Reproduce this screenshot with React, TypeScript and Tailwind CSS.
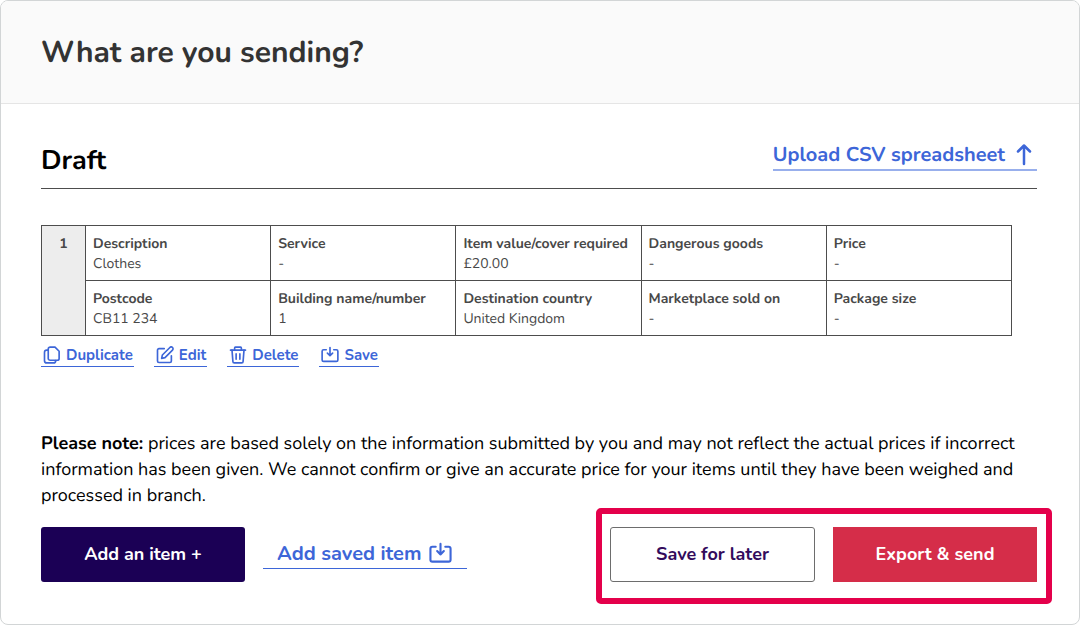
import type { ReactNode } from "react";

type Field = { label: string; value: string };

const rows: Field[][] = [
  [
    { label: "Description", value: "Clothes" },
    { label: "Service", value: "-" },
    { label: "Item value/cover required", value: "£20.00" },
    { label: "Dangerous goods", value: "-" },
    { label: "Price", value: "-" },
  ],
  [
    { label: "Postcode", value: "CB11 234" },
    { label: "Building name/number", value: "1" },
    { label: "Destination country", value: "United Kingdom" },
    { label: "Marketplace sold on", value: "-" },
    { label: "Package size", value: "-" },
  ],
];

function Icon({ className, children }: { className: string; children: ReactNode }) {
  return (
    <svg
      viewBox="0 0 24 24"
      className={className}
      fill="none"
      stroke="currentColor"
      strokeWidth="2.2"
      strokeLinecap="round"
      strokeLinejoin="round"
      aria-hidden="true"
    >
      {children}
    </svg>
  );
}

function SaveIcon({ className }: { className: string }) {
  return (
    <Icon className={className}>
      <path d="M7 5H3.500a2 2 0 0 0-2 2v11.500a2 2 0 0 0 2 2h17a2 2 0 0 0 2-2V7a2 2 0 0 0-2-2h-3.500" />
      <path d="M12 2v11M8.500 9.500l3.500 3.500 3.500-3.500" />
    </Icon>
  );
}

function DuplicateIcon({ className }: { className: string }) {
  return (
    <Icon className={className}>
      <path d="M9.500 1.500h6.500l5.500 5.500v9.500a2.500 2.500 0 0 1-2.500 2.500h-9.500a2.500 2.500 0 0 1-2.500-2.500V4a2.500 2.500 0 0 1 2.500-2.500z" />
      <path d="M7 5.500H5A3 3 0 0 0 2 8.500v11a3 3 0 0 0 3 3h9a3 3 0 0 0 3-3" />
    </Icon>
  );
}

function EditIcon({ className }: { className: string }) {
  return (
    <Icon className={className}>
      <path d="M11 3.500H4a2 2 0 0 0-2 2V20a2 2 0 0 0 2 2h14.500a2 2 0 0 0 2-2v-7" />
      <path d="M18.500 2a2.300 2.300 0 0 1 3.500 3.500L12 15.500l-4.500 1 1-4.500z" />
    </Icon>
  );
}

function TrashIcon({ className }: { className: string }) {
  return (
    <Icon className={className}>
      <path d="M2 5.500h20M7.500 5.500v-3a1 1 0 0 1 1-1h7a1 1 0 0 1 1 1v3" />
      <path d="M4 5.500l1.200 15a2 2 0 0 0 2 2h9.600a2 2 0 0 0 2-2l1.200-15M9.500 10.500v7M14.500 10.500v7" />
    </Icon>
  );
}

const actions = [
  { label: "Duplicate", icon: DuplicateIcon },
  { label: "Edit", icon: EditIcon },
  { label: "Delete", icon: TrashIcon },
  { label: "Save", icon: SaveIcon },
];

export default function App() {
  return (
    <main className="min-h-screen overflow-hidden rounded-lg border border-[#d2d5d6] bg-white font-['Nunito','Nunito_Sans','Lato',sans-serif] text-black [text-rendering:geometricPrecision]">
      <header className="border-b border-[#e5e5e5] bg-[#fafafa] px-10 pt-8 pb-[30px]">
        <h1 className="text-[30px] leading-10 font-bold text-[#333]">What are you sending?</h1>
      </header>

      <div className="pr-[42px] pl-10">
        <div className="flex items-start justify-between border-b border-[#4d4d4d] pt-[37px] pb-[7px]">
          <h2 className="text-[27px] leading-10 font-bold">Draft</h2>
          <a
            href="#upload"
            className="flex items-center border-b-2 border-[#98afec] pt-[2px] text-[20px] leading-[26px] font-bold text-[#3d66d8]"
          >
            Upload CSV spreadsheet
            <svg
              viewBox="0 0 24 24"
              className="mr-[1px] ml-[7px] size-6"
              fill="none"
              stroke="currentColor"
              strokeWidth="2.500"
              strokeLinecap="round"
              strokeLinejoin="round"
              aria-hidden="true"
            >
              <path d="M12 20V2M6 7.500L12 1.500l6 6" />
            </svg>
          </a>
        </div>

        <div className="mt-9 pr-[25px]">
          <table className="w-full table-fixed border-collapse text-sm leading-5 text-[#484848]">
            <colgroup>
              <col className="w-11" />
              <col />
              <col />
              <col />
              <col />
              <col />
            </colgroup>
            <tbody>
              {rows.map((row, index) => (
                <tr key={index}>
                  {index === 0 && (
                    <th
                      rowSpan={2}
                      scope="rowgroup"
                      className="border border-[#4d4d4d] bg-[#ededed] pt-2 text-center align-top font-bold"
                    >
                      1
                    </th>
                  )}
                  {row.map((field) => (
                    <td key={field.label} className="border border-[#4d4d4d] px-[7px] pt-2 pb-[6px] whitespace-nowrap">
                      <div className="font-bold">{field.label}</div>
                      <div>{field.value}</div>
                    </td>
                  ))}
                </tr>
              ))}
            </tbody>
          </table>
        </div>

        <div className="mt-[9px] flex gap-5 text-[15px] leading-5 font-bold text-[#3d66d8]">
          {actions.map(({ label, icon: ActionIcon }) => (
            <button
              key={label}
              type="button"
              className="flex items-center border-b border-[#3d66d8] pr-[1px] pb-[1px] pl-[2px]"
            >
              <ActionIcon className="mr-[5px] size-[18px]" />
              {label}
            </button>
          ))}
        </div>

        <p className="mt-16 text-[18px] leading-[26px]">
          <strong>Please note:</strong> prices are based solely on the information submitted by you and may not reflect
          the actual prices if incorrect information has been given. We cannot confirm or give an accurate price for
          your items until they have been weighed and processed in branch.
        </p>

        <div className="mt-[18px] flex items-start justify-between">
          <div className="flex items-start gap-[18px]">
            <button type="button" className="h-[55px] w-[204px] rounded-[3px] bg-[#1b0055] text-[18px] font-bold text-white">
              Add an item +
            </button>
            <button
              type="button"
              className="mt-3 flex h-[30px] w-[204px] items-center border-b border-[#3d66d8] pl-[14px] text-[20px] leading-[26px] font-bold text-[#3d66d8]"
            >
              Add saved item
              <SaveIcon className="ml-2 size-[23px]" />
            </button>
          </div>
          <div className="relative flex gap-[18px]">
            <button
              type="button"
              className="h-[55px] w-[205px] rounded-[3px] border border-[#6d6d6d] text-[18px] font-bold text-[#330b5c]"
            >
              Save for later
            </button>
            <button type="button" className="h-[55px] w-[204px] bg-[#d52d49] text-[18px] font-bold text-white">
              Export &amp; send
            </button>
            <div className="pointer-events-none absolute -top-[19px] -right-[15px] -bottom-[22px] -left-[14px] rounded-[5px] border-6 border-[#e4004b]" />
          </div>
        </div>
      </div>
    </main>
  );
}
